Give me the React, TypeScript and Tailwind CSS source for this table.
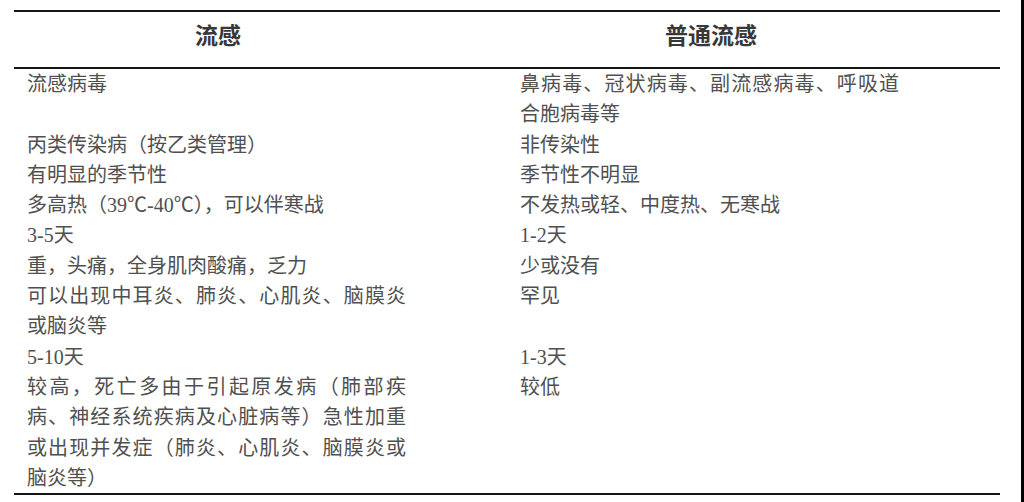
const rows: [string, string][] = [
  ['流感病毒', '鼻病毒、冠状病毒、副流感病毒、呼吸道合胞病毒等'],
  ['丙类传染病（按乙类管理）', '非传染性'],
  ['有明显的季节性', '季节性不明显'],
  ['多高热（39℃-40℃），可以伴寒战', '不发热或轻、中度热、无寒战'],
  ['3-5天', '1-2天'],
  ['重，头痛，全身肌肉酸痛，乏力', '少或没有'],
  ['可以出现中耳炎、肺炎、心肌炎、脑膜炎或脑炎等', '罕见'],
  ['5-10天', '1-3天'],
  ['较高，死亡多由于引起原发病（肺部疾病、神经系统疾病及心脏病等）急性加重或出现并发症（肺炎、心肌炎、脑膜炎或脑炎等）', '较低'],
];

export default function App() {
  return (
    <div
      className="flex w-[1024px] h-[502px] bg-white overflow-hidden"
      style={{ fontFamily: '"Liberation Serif", "Noto Sans CJK SC", serif' }}
    >
      <div className="flex-1 pt-[10px] pl-[14px]">
        <div className="w-[986px]">
          {/* header */}
          <div className="grid grid-cols-[408px_578px] h-[59px] border-y-2 border-[#151515] items-center pb-[4px] text-[23px] font-bold text-[#383838]">
            <div className="text-center">流感</div>
            <div className="text-center">普通流感</div>
          </div>

          {/* body */}
          <div className="border-b-2 border-[#151515] text-[20px] leading-[30.3px] text-[#505050]">
            {rows.map(([a, b], i) => (
              <div key={i} className="grid grid-cols-[408px_578px]">
                <div className="pl-[13px]">
                  <p className="w-[379px] text-justify">{a}</p>
                </div>
                <div className="pl-[98px]">
                  <p className="w-[379px] text-justify">{b}</p>
                </div>
              </div>
            ))}
          </div>
        </div>
      </div>
      <div className="w-[3px] bg-black" />
    </div>
  );
}
